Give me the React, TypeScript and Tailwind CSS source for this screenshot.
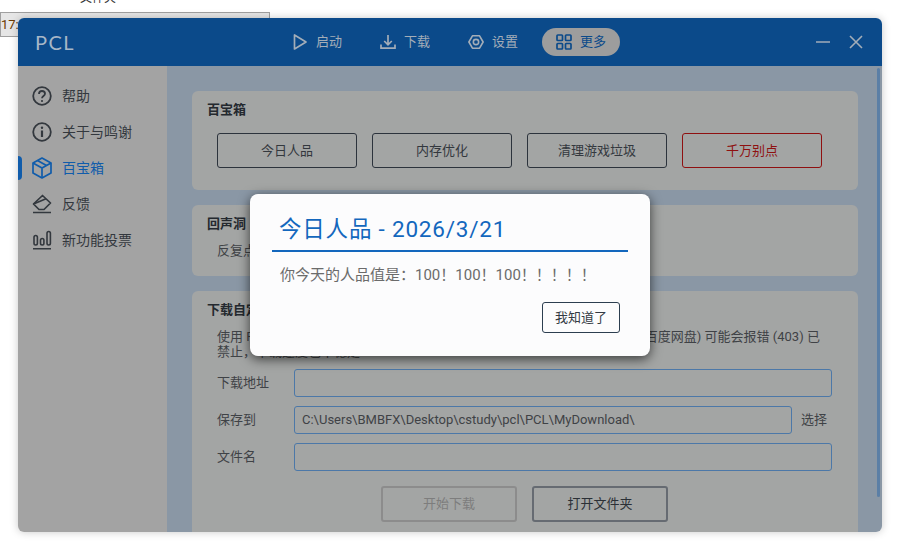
const font = { cjk: "font-['Roboto','Noto_Sans_CJK_SC',sans-serif]" };

function IconPlay() {
  return (
    <svg width="16" height="18" viewBox="0 0 16 18" fill="none" stroke="currentColor" strokeWidth="1.7">
      <path d="M2.5 2v14L14 9z" strokeLinejoin="round" />
    </svg>
  );
}

function IconDownload() {
  return (
    <svg width="16" height="16" viewBox="0 0 16 16" fill="none" stroke="currentColor" strokeWidth="1.7">
      <path d="M8 1v9.5M4.2 7l3.8 3.8L11.8 7M1 10.5v3.7h14v-3.7" />
    </svg>
  );
}

function IconSettings() {
  return (
    <svg width="16" height="16" viewBox="0 0 18 16" fill="none" stroke="currentColor" strokeWidth="1.8">
      <path d="M5 1h8l4 7-4 7H5L1 8z" strokeLinejoin="round" />
      <circle cx="9" cy="8" r="3" />
    </svg>
  );
}

function IconGrid() {
  return (
    <svg width="16" height="16" viewBox="0 0 16 16" fill="none" stroke="currentColor" strokeWidth="1.7">
      <rect x="1" y="1" width="5.5" height="5.5" rx="0.8" />
      <rect x="9.5" y="1" width="5.5" height="5.5" rx="0.8" />
      <rect x="1" y="9.5" width="5.5" height="5.5" rx="0.8" />
      <rect x="9.5" y="9.5" width="5.5" height="5.5" rx="0.8" />
    </svg>
  );
}

function IconHelp() {
  return (
    <svg width="20" height="20" viewBox="0 0 20 20" fill="none" stroke="currentColor" strokeWidth="1.8">
      <circle cx="10" cy="10" r="8.800" />
      <path d="M7 8c0-1.900 1.300-3 3-3s3 1.100 3 2.700c0 2.300-3 2.300-3 4.500" />
      <circle cx="10" cy="15" r="1.100" fill="currentColor" stroke="none" />
    </svg>
  );
}

function IconInfo() {
  return (
    <svg width="20" height="20" viewBox="0 0 20 20" fill="none" stroke="currentColor" strokeWidth="1.8">
      <circle cx="10" cy="10" r="8.800" />
      <path d="M10 8.500V15" strokeWidth="2.200" />
      <circle cx="10" cy="5.700" r="1.200" fill="currentColor" stroke="none" />
    </svg>
  );
}

function IconBox() {
  return (
    <svg width="20" height="22" viewBox="0 0 20 22" fill="none" stroke="currentColor" strokeWidth="1.700">
      <path d="M10 1l9 5v10l-9 5-9-5V6z" strokeLinejoin="round" />
      <path d="M1 6l9 5 9-5M10 11v10M5.500 3.500l9 5" />
    </svg>
  );
}

function IconFeedback() {
  return (
    <svg width="20" height="20" viewBox="0 0 20 20" fill="none" stroke="currentColor" strokeWidth="1.700">
      <path d="M10.500 1.500l8 7.500-6.500 6.500H7L1.500 10z" strokeLinejoin="round" />
      <path d="M1.500 10l12.500-5.200" />
      <path d="M1 18.500h18" />
    </svg>
  );
}

function IconVote() {
  return (
    <svg width="20" height="20" viewBox="0 0 20 20" fill="none" stroke="currentColor" strokeWidth="1.600">
      <rect x="2" y="5.500" width="3.400" height="9.500" rx="1.700" />
      <rect x="8.500" y="8.500" width="3.400" height="6.500" rx="1.700" />
      <rect x="15" y="1.500" width="3.400" height="13.500" rx="1.700" />
      <path d="M1 18.800h18" />
    </svg>
  );
}

function NavItem({ icon, label }: { icon: React.ReactNode; label: string }) {
  return (
    <div className="flex items-center gap-2 text-[#a3adb8]">
      {icon}
      <span className="text-[13px]">{label}</span>
    </div>
  );
}

function SideItem({ icon, label, active }: { icon: React.ReactNode; label: string; active?: boolean }) {
  return (
    <div className={`relative flex h-9 items-center gap-[10px] pl-[14px] ${active ? "text-[#105cab]" : "text-[#33383e]"}`}>
      {active && <div className="absolute left-0 top-[6px] h-6 w-1 rounded-r bg-[#105cab]" />}
      <span className="flex w-5 justify-center">{icon}</span>
      <span className="text-sm">{label}</span>
    </div>
  );
}

function Card({ title, className, children }: { title: string; className: string; children: React.ReactNode }) {
  return (
    <section className={`rounded-md bg-[#a3a5a4] pl-[15px] pr-[26px] pt-[11px] ${className}`}>
      <h2 className="text-[13px] font-bold leading-4 text-[#24292f]">{title}</h2>
      {children}
    </section>
  );
}

function ToolButton({ label, danger }: { label: string; danger?: boolean }) {
  return (
    <button className={`flex h-[35px] w-[140px] items-center justify-center rounded-[3px] border text-[13px] ${danger ? "border-[#8f1010] text-[#8f1010]" : "border-[#2c333c] text-[#33383e]"}`}>
      {label}
    </button>
  );
}

function Field({ label, value, action }: { label: string; value?: string; action?: string }) {
  return (
    <div className="flex h-7 items-center">
      <span className="w-[77px] text-[13px] text-[#3f4246]">{label}</span>
      <div className="flex h-7 flex-1 items-center rounded-[3px] border border-[#4c78a8] px-[7px] text-[13px] text-[#3f4246]">
        {value}
      </div>
      {action && <span className="ml-[9px] w-[31px] text-[13px] text-[#3f4246]">{action}</span>}
    </div>
  );
}

export default function App() {
  return (
    <div className={`relative h-[550px] w-[900px] overflow-hidden bg-white pl-[18px] pt-[18px] ${font.cjk}`}>
      <div className="absolute left-[80px] top-[-11px] text-[12px] text-[#333]">文件夹</div>
      <div className="absolute left-0 top-[12px] h-[25px] w-[270px] border border-[#a0a0a0] bg-[#e6e6e6] text-[13px] leading-6 text-[#6b3a00]">17:</div>

      <div className="relative flex h-[514px] w-[864px] flex-col overflow-hidden rounded-md shadow-[0_0_8px_rgba(0,0,0,0.22)]">
        <header className="flex h-12 shrink-0 items-center bg-[#0b4a8a] pl-[17px] pr-[19px]">
          <div className="w-[257px] font-['Lato',sans-serif] text-[20px] tracking-[1.5px] text-[#a7b7c7]">PCL</div>
          <nav className="flex items-center gap-[38px]">
            <NavItem icon={<IconPlay />} label="启动" />
            <NavItem icon={<IconDownload />} label="下载" />
            <NavItem icon={<IconSettings />} label="设置" />
            <div className="-ml-[14px] flex h-7 items-center gap-2 rounded-full bg-[#9d9d9d] px-[14px] text-[#0b4a8a]">
              <IconGrid />
              <span className="text-[13px]">更多</span>
            </div>
          </nav>
          <div className="ml-auto flex items-center gap-[19px] text-[#a3adb8]">
            <svg width="14" height="14" viewBox="0 0 14 14" fill="none" stroke="currentColor" strokeWidth="1.6">
              <path d="M0 7h14" />
            </svg>
            <svg width="14" height="14" viewBox="0 0 14 14" fill="none" stroke="currentColor" strokeWidth="1.6">
              <path d="M1 1l12 12M13 1L1 13" />
            </svg>
          </div>
        </header>

        <div className="flex min-h-0 flex-1">
          <aside className="w-[149px] shrink-0 bg-[#a3a3a3] pt-3">
            <SideItem icon={<IconHelp />} label="帮助" />
            <SideItem icon={<IconInfo />} label="关于与鸣谢" />
            <SideItem icon={<IconBox />} label="百宝箱" active />
            <SideItem icon={<IconFeedback />} label="反馈" />
            <SideItem icon={<IconVote />} label="新功能投票" />
          </aside>

          <main className="relative flex flex-1 flex-col gap-[15px] overflow-hidden bg-[#8a97a5] pl-[25px] pr-6 pt-[25px]">
            <Card title="百宝箱" className="h-[99px] shrink-0">
              <div className="ml-[10px] mt-[15px] flex gap-[15px]">
                <ToolButton label="今日人品" />
                <ToolButton label="内存优化" />
                <ToolButton label="清理游戏垃圾" />
                <ToolButton label="千万别点" danger />
              </div>
            </Card>

            <Card title="回声洞" className="h-[71px] shrink-0">
              <p className="ml-[10px] mt-[9px] text-[13px] text-[#3f4246]">反复点击这里可以查看更多内容</p>
            </Card>

            <Card title="下载自定义文件" className="h-[260px] shrink-0">
              <p className="ml-[10px] mt-[11px] text-[13px] leading-[15px] text-[#3f4246]">
                使用 PCL 下载自定义文件时，部分网站的下载可能很慢，一些下载链接 (如百度网盘) 可能会报错 (403) 已
                <br />
                禁止，下载速度也不稳定
              </p>
              <div className="ml-[10px] mt-[10px] flex flex-col gap-[9px]">
                <Field label="下载地址" />
                <Field label="保存到" value="C:\Users\BMBFX\Desktop\cstudy\pcl\PCL\MyDownload\" action="选择" />
                <Field label="文件名" />
              </div>
              <div className="mt-[15px] flex justify-center gap-[15px] pl-[10px]">
                <button className="h-9 w-[136px] rounded-[3px] border-2 border-[#8c8c8c] text-[13px] text-[#7d7d7d]">开始下载</button>
                <button className="h-9 w-[136px] rounded-[3px] border-2 border-[#666b72] text-[13px] text-[#2b3036]">打开文件夹</button>
              </div>
            </Card>

            <div className="absolute right-[2px] top-[2px] h-[429px] w-[3px] rounded-full bg-[#5b7fa6]" />
          </main>
        </div>

        <div className="absolute left-[232px] top-[176px] h-[162px] w-[400px] rounded-lg bg-[#fcfcfd] px-[22px] pt-[17px] shadow-[0_3px_12px_rgba(0,0,0,0.65)]">
          <h1 className="border-b-2 border-[#1367bd] pb-[3px] pl-[7px] text-[22.500px] leading-[36px] tracking-[0.8px] text-[#1367bd]">今日人品 - 2026/3/21</h1>
          <p className="mt-[13px] pl-2 text-[15px] leading-5 text-[#6b6b6b]">你今天的人品值是：100！100！100！！！！！</p>
          <div className="mt-[17px] flex justify-end pr-2">
            <button className="h-[31px] w-[78px] rounded-[3px] border border-[#2c3e50] text-[13px] text-[#343b44]">我知道了</button>
          </div>
        </div>
      </div>
    </div>
  );
}
